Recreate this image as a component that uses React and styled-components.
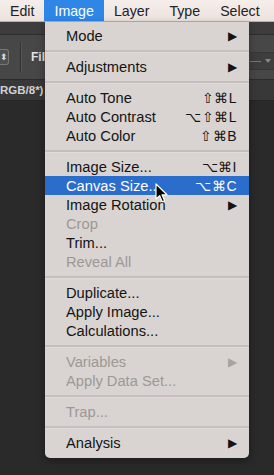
import React from 'react'
import styled, { createGlobalStyle } from 'styled-components'

const GlobalStyle = createGlobalStyle`
  html, body {
    margin: 0;
    padding: 0;
    background: #2a2a2a;
  }
  * { box-sizing: border-box; }
`;

const menuItems = [
  { label: 'Mode', arrow: true },
  { sep: true },
  { label: 'Adjustments', arrow: true },
  { sep: true },
  { label: 'Auto Tone', keys: '⇧⌘L' },
  { label: 'Auto Contrast', keys: '⌥⇧⌘L' },
  { label: 'Auto Color', keys: '⇧⌘B' },
  { sep: true },
  { label: 'Image Size...', keys: '⌥⌘I' },
  { label: 'Canvas Size...', keys: '⌥⌘C', active: true },
  { label: 'Image Rotation', arrow: true },
  { label: 'Crop', disabled: true },
  { label: 'Trim...' },
  { label: 'Reveal All', disabled: true },
  { sep: true },
  { label: 'Duplicate...' },
  { label: 'Apply Image...' },
  { label: 'Calculations...' },
  { sep: true },
  { label: 'Variables', arrow: true, disabled: true },
  { label: 'Apply Data Set...', disabled: true },
  { sep: true },
  { label: 'Trap...', disabled: true },
  { sep: true },
  { label: 'Analysis', arrow: true },
];

const titles = ['Edit', 'Image', 'Layer', 'Type', 'Select'];

function App() {
  return (
    <>
      <GlobalStyle />
      <Screen>
        <MenuBar>
          {titles.map((t) => (
            <MenuTitle key={t} open={t === 'Image'}>{t}</MenuTitle>
          ))}
        </MenuBar>
        <TopStrip />
        <OptionsBar>
          <SpinBox>⬍</SpinBox>
          <VSep />
          <OptLabel>Fill:</OptLabel>
          <Spacer />
          <DropBox>
            <SliderLine />
            <DropArrow />
          </DropBox>
        </OptionsBar>
        <TabBar>
          <TabLabel>RGB/8*)</TabLabel>
        </TabBar>
        <Canvas />

        <Menu>
          {menuItems.map((item, i) =>
            item.sep ? (
              <Separator key={i} />
            ) : (
              <Item key={i} active={item.active} disabled={item.disabled}>
                <span>{item.label}</span>
                {item.keys && <Keys>{item.keys}</Keys>}
                {item.arrow && <Arrow disabled={item.disabled}>▶</Arrow>}
              </Item>
            )
          )}
        </Menu>

        <Pointer width="14" height="21" viewBox="0 0 14 21">
          <path
            d="M1 1 L1 16 L4.6 12.6 L7.2 18.8 L9.6 17.8 L7 11.8 L12 11.8 Z"
            fill="#000"
            stroke="#fff"
            strokeWidth="1.2"
            strokeLinejoin="round"
          />
        </Pointer>
      </Screen>
    </>
  )
}

const Screen = styled.div`
  position: relative;
  width: 274px;
  height: 475px;
  overflow: hidden;
  display: flex;
  flex-direction: column;
  background: #2a2a2a;
  font-family: "Liberation Sans", Arial, sans-serif;
`;

const MenuBar = styled.div`
  height: 22px;
  flex-shrink: 0;
  display: flex;
  align-items: stretch;
  background: linear-gradient(#f6eeeb, #ece2de);
  border-bottom: 1px solid #b9b0ac;
`;

const MenuTitle = styled.div`
  display: flex;
  align-items: center;
  padding: 0 10px;
  font-size: 14.2px;
  color: ${(p) => (p.open ? '#fff' : '#222')};
  background: ${(p) => (p.open ? '#2e86e6' : 'transparent')};
  white-space: nowrap;
`;

const TopStrip = styled.div`
  height: 13px;
  flex-shrink: 0;
  background: #3d3d3d;
  border-bottom: 1px solid #2e2e2e;
`;

const OptionsBar = styled.div`
  height: 45px;
  flex-shrink: 0;
  display: flex;
  align-items: center;
  background: #474747;
  border-bottom: 1px solid #2c2c2c;
`;

const SpinBox = styled.div`
  width: 9px;
  height: 16px;
  border: 1px solid #777;
  border-left: none;
  border-radius: 0 3px 3px 0;
  background: #505050;
  color: #d8d8d8;
  font-size: 9px;
  display: flex;
  align-items: center;
  justify-content: center;
`;

const VSep = styled.div`
  width: 1px;
  height: 30px;
  margin-left: 11px;
  background: #333;
  box-shadow: 1px 0 0 #555;
`;

const OptLabel = styled.div`
  margin-left: 10px;
  color: #e2e2e2;
  font-weight: bold;
  font-size: 12px;
`;

const Spacer = styled.div`
  flex: 1;
`;

const DropBox = styled.div`
  width: 24px;
  height: 18px;
  margin-top: 8px;
  border-top: 1px solid #363636;
  border-bottom: 1px solid #363636;
  background: #3e3e3e;
  display: flex;
  align-items: center;
  gap: 4px;
`;

const SliderLine = styled.div`
  flex: 1;
  height: 1px;
  background: #777;
`;

const DropArrow = styled.div`
  width: 0;
  height: 0;
  margin-right: 3px;
  border-left: 3px solid transparent;
  border-right: 3px solid transparent;
  border-top: 4px solid #888;
`;

const TabBar = styled.div`
  height: 21px;
  flex-shrink: 0;
  display: flex;
  align-items: center;
  background: #383838;
  border-bottom: 1px solid #252525;
`;

const TabLabel = styled.div`
  margin-left: 0;
  color: #d2d2d2;
  font-weight: bold;
  font-size: 11.5px;
`;

const Canvas = styled.div`
  flex: 1;
  background: #2a2a2a;
`;

const Menu = styled.div`
  position: absolute;
  left: 45px;
  top: 22px;
  width: 204px;
  padding: 4px 0 6px;
  background: #d9d4d1;
  border-radius: 0 0 5px 5px;
  box-shadow: 0 3px 8px rgba(0, 0, 0, 0.35);
  display: flex;
  flex-direction: column;
`;

const Item = styled.div`
  height: 19px;
  display: flex;
  align-items: center;
  padding: 0 12px 0 21px;
  font-size: 14.7px;
  white-space: nowrap;
  color: ${(p) => (p.active ? '#fff' : p.disabled ? '#9d9895' : '#141414')};
  background: ${(p) => (p.active ? '#2b6dcb' : 'transparent')};

  span {
    flex: 1;
  }
`;

const Keys = styled.div`
  font-size: 14px;
  letter-spacing: 0.5px;
`;

const Arrow = styled.div`
  font-size: 12px;
  margin-right: 0;
  color: ${(p) => (p.disabled ? '#a8a3a0' : '#141414')};
`;

const Separator = styled.div`
  height: 12px;
  display: flex;
  align-items: center;

  &::after {
    content: '';
    flex: 1;
    height: 2px;
    background: #c4bfbc;
    border-bottom: 1px solid #e0dbd8;
  }
`;

const Pointer = styled.svg`
  position: absolute;
  left: 155px;
  top: 183px;
`;

export default App
